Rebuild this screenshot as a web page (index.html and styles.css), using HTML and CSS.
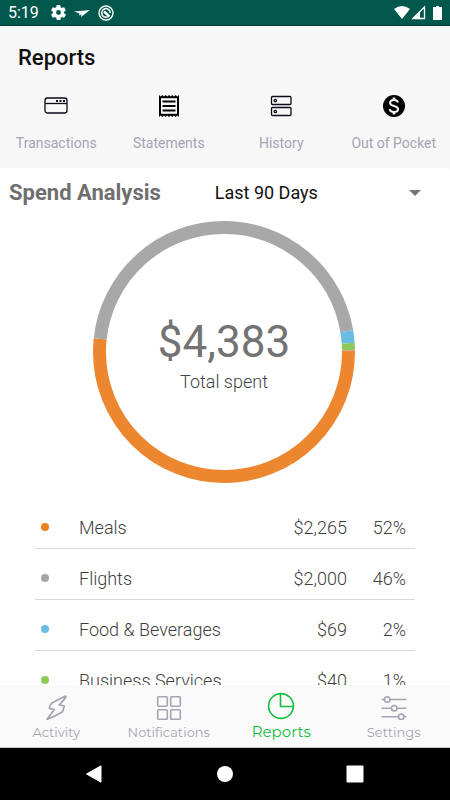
FILE: index.html
```html
<!DOCTYPE html>
<html lang="en">
<head>
<meta charset="utf-8">
<meta name="viewport" content="width=device-width, initial-scale=1">
<title>Reports</title>
<link rel="stylesheet" href="styles.css">
</head>
<body>
<div class="status">
  <div class="status-group">
    <span class="clock">5:19</span>
    <svg width="15" height="15" viewBox="2 2 20 20"><path fill="#fff" d="M19.4 13c0-.3.1-.6.1-1s0-.7-.1-1l2.100-1.600c.2-.2.2-.4.100-.6l-2-3.500c-.1-.2-.4-.3-.6-.2l-2.500 1c-.5-.4-1.100-.7-1.700-1l-.4-2.700c0-.2-.2-.4-.5-.4h-4c-.2 0-.5.200-.5.4l-.4 2.700c-.6.2-1.200.6-1.700 1l-2.500-1c-.2-.1-.5 0-.6.2l-2 3.500c-.1.2-.1.5.1.600L4.500 11c0 .3-.1.700-.1 1s0 .7.1 1l-2.100 1.700c-.2.100-.2.400-.1.600l2 3.500c.1.200.4.300.6.200l2.500-1c.5.400 1.100.7 1.700 1l.4 2.600c0 .200.2.400.5.400h4c.2 0 .5-.2.5-.4l.4-2.600c.6-.3 1.200-.6 1.700-1l2.500 1c.2.100.5 0 .6-.2l2-3.500c.1-.2.1-.5-.1-.6zM12 15.200a3.200 3.200 0 1 1 0-6.400 3.200 3.200 0 0 1 0 6.400z"/></svg>
    <svg width="16" height="16" viewBox="0 0 16 16"><path fill="#fff" d="M0 6.500 16 5 7 12 7.500 9.500 5 10.500 5.500 8.500z"/></svg>
    <svg width="16" height="16" viewBox="0 0 16 16" fill="none" stroke="#fff"><circle cx="8" cy="8" r="7" stroke-width="1.400"/><path stroke-width="1.500" d="M11 11A4.300 4.300 0 1 1 12.300 8"/><path stroke-width="2.400" d="M6 6.500l5.500 5"/></svg>
  </div>
  <div class="status-group status-right">
    <svg width="44" height="16" viewBox="0 0 44 16"><path fill="#fff" d="M5 4Q13-2 21 4L13 14z"/><path fill="none" stroke="#fff" stroke-width="1.300" d="M24 13.500 35.500 2v11.500z"/><path fill="#fff" d="M23 14l8-8v8z"/></svg>
    <svg width="9" height="16" viewBox="0 0 9 16"><path fill="#fff" d="M3 1h3v1h3v13H0V2h3z"/></svg>
  </div>
</div>

<header class="header">
  <h1>Reports</h1>
  <nav class="shortcuts" aria-label="Report types">
    <a href="#transactions">
      <svg width="24" height="24" viewBox="0 0 24 24" fill="none" stroke="#0b0b1c" stroke-width="1.300"><rect x="1" y="4" width="22" height="15" rx="2.500"/><path d="M1 9.500h22"/><path stroke-width="2" d="M12 7h2M15.500 7h2M19 7h2"/></svg>
      <span>Transactions</span></a>
    <a href="#statements">
      <svg width="24" height="24" viewBox="0 0 24 24"><path fill="#050505" d="M2 1l1.700 1.500L5.300 1 7 2.500 8.700 1l1.600 1.500L12 1l1.700 1.500L15.300 1 17 2.500 18.700 1l1.600 1.500L22 1v22l-1.700-1.500-1.600 1.500-1.700-1.500-1.700 1.500-1.600-1.500L12 23l-1.700-1.500L8.700 23 7 21.500 5.300 23l-1.600-1.500L2 23z"/><path fill="#f7f7f7" d="M4 4.200h16v15.600H4z"/><path stroke="#050505" stroke-width="2" d="M5.500 7.500h13M5.500 12h13M5.500 16.500h13"/></svg>
      <span>Statements</span></a>
    <a href="#history">
      <svg width="24" height="24" viewBox="0 0 24 24" fill="none" stroke="#0b0b1c" stroke-width="1.300"><rect x="2.500" y="2.500" width="19.500" height="8" rx="1"/><rect x="2.500" y="13.500" width="19.500" height="8" rx="1"/><circle cx="6.300" cy="6.500" r="1.200"/><circle cx="6.300" cy="17.500" r="1.200"/></svg>
      <span>History</span></a>
    <a href="#out-of-pocket">
      <svg width="24" height="24" viewBox="0 0 24 24" fill="none" stroke="#f7f7f7"><circle cx="12" cy="12" r="11" fill="#000" stroke="none"/><path stroke-width="2" d="M16 8.500C15.500 6.800 14 6 12 6c-2.300 0-3.900 1.100-3.900 2.900 0 4.100 8 2 8 6.200 0 1.900-1.700 2.900-4.100 2.900-2.300 0-4-.9-4.300-2.900"/><path stroke-width="2.600" d="M12 3.500V6M12 18v2.500"/></svg>
      <span>Out of Pocket</span></a>
  </nav>
</header>

<main class="analysis">
  <div class="analysis-head">
    <h2><label for="period">Spend Analysis</label></h2>
    <div class="period">
      <select id="period"><option>Last 90 Days</option><option>Last 30 Days</option></select>
      <svg width="12" height="6" viewBox="0 0 12 6"><path fill="#757575" d="M0 0h12L6 6z"/></svg>
    </div>
  </div>
  <div class="chart">
    <svg width="262" height="262" viewBox="0 0 262 262" fill="none" stroke-width="13" role="img" aria-label="Spend by category">
      <circle cx="131" cy="131" r="124.500" stroke="#ec872f" pathLength="4383" stroke-dasharray="2265 2118"/>
      <circle cx="131" cy="131" r="124.500" stroke="#a8a8a8" pathLength="4383" stroke-dasharray="2000 2383" stroke-dashoffset="-2265"/>
      <circle cx="131" cy="131" r="124.500" stroke="#69bce2" pathLength="4383" stroke-dasharray="69 4314" stroke-dashoffset="-4265"/>
      <circle cx="131" cy="131" r="124.500" stroke="#8dca5b" pathLength="4383" stroke-dasharray="40 4343" stroke-dashoffset="-4334"/>
      <circle cx="131" cy="131" r="124.500" stroke="#ec8750" pathLength="4383" stroke-dasharray="9 4374" stroke-dashoffset="-4374"/>
    </svg>
    <div class="total"><strong>$4,383</strong><span>Total spent</span></div>
  </div>
  <table class="categories">
    <tbody>
      <tr><td class="mark"><i class="dot meals"></i></td><th scope="row">Meals</th><td>$2,265</td><td class="share">52%</td></tr>
      <tr><td class="mark"><i class="dot flights"></i></td><th scope="row">Flights</th><td>$2,000</td><td class="share">46%</td></tr>
      <tr><td class="mark"><i class="dot food"></i></td><th scope="row">Food &amp; Beverages</th><td>$69</td><td class="share">2%</td></tr>
      <tr><td class="mark"><i class="dot business"></i></td><th scope="row">Business Services</th><td>$40</td><td class="share">1%</td></tr>
    </tbody>
  </table>
</main>

<nav class="tabs" aria-label="Main">
  <a href="#activity">
    <svg width="28" height="28" viewBox="0 0 28 28" fill="none" stroke="#a5a4b3" stroke-width="1.700" stroke-linejoin="round"><path d="M23.500 4 9.500 11.200Q7.500 14 7.300 16.300l5 1.200L5 27.300Q13 24.500 20.500 19.800L22.300 14l-5-1.200Q22 8.500 24 4.500z"/></svg>
    <span>Activity</span></a>
  <a href="#notifications">
    <svg width="28" height="28" viewBox="0 0 28 28" fill="none" stroke="#a5a4b3" stroke-width="1.600"><rect x="2.700" y="4.700" width="9.600" height="9.600" rx="1"/><rect x="15.700" y="4.700" width="9.600" height="9.600" rx="1"/><rect x="2.700" y="17.700" width="9.600" height="9.600" rx="1"/><rect x="15.700" y="17.700" width="9.600" height="9.600" rx="1"/></svg>
    <span>Notifications</span></a>
  <a href="#reports" class="current" aria-current="page">
    <svg width="28" height="28" viewBox="0 0 28 28" fill="none" stroke="#13be43" stroke-width="1.600"><circle cx="14" cy="14" r="12.400"/><path d="M13.500 1.600V14.500h12.900"/></svg>
    <span>Reports</span></a>
  <a href="#settings">
    <svg width="28" height="28" viewBox="0 0 28 28" fill="none" stroke="#a5a4b3" stroke-width="1.600"><path d="M1.500 7.500h3M10 7.500h16.500M1.500 16.200h10M17 16.200h9.500M1.500 24.800h17M24 24.800h2.500"/><circle cx="7.200" cy="7.500" r="2.700"/><circle cx="14.200" cy="16.200" r="2.700"/><circle cx="21.200" cy="24.800" r="2.700"/></svg>
    <span>Settings</span></a>
</nav>

<div class="system">
  <button type="button" aria-label="Back"><svg width="18" height="20" viewBox="0 0 18 20"><path fill="#fff" stroke="#fff" stroke-linejoin="round" d="M1.500 10 16 1.800v16.400z"/></svg></button>
  <button type="button" aria-label="Home"><svg width="18" height="18" viewBox="0 0 18 18"><circle cx="9" cy="9" r="8" fill="#fff"/></svg></button>
  <button type="button" aria-label="Recent apps"><svg width="18" height="18" viewBox="0 0 18 18"><rect x="0.500" y="0.500" width="17" height="17" rx="1" fill="#fff"/></svg></button>
</div>
</body>
</html>
```
FILE: styles.css
```css
* { box-sizing: border-box; }
body {
  margin: 0;
  height: 100vh;
  display: flex;
  flex-direction: column;
  overflow: hidden;
  background: #f7f7f7;
  font-family: Roboto, "Liberation Sans", sans-serif;
}
svg { display: block; flex: none; }
a { color: inherit; text-decoration: none; }
h1, h2 { margin: 0; }

.status {
  flex: none;
  height: 26px;
  padding: 0 8px;
  display: flex;
  justify-content: space-between;
  align-items: center;
  background: #00574b;
  border-bottom: 1px solid #003d2c;
  color: #fff;
}
.status-group { display: flex; align-items: center; gap: 8px; }
.status-right { gap: 0; }
.clock { font-size: 16px; margin-right: 4px; }

.header { flex: none; background: #f7f7f7; padding: 16px 0; }
h1 {
  padding: 0 18px;
  font-size: 22px;
  line-height: 32px;
  font-weight: 500;
  color: #101010;
}
.shortcuts {
  display: grid;
  grid-template-columns: repeat(4, 1fr);
  padding-top: 20px;
}
.shortcuts a {
  display: flex;
  flex-direction: column;
  align-items: center;
  gap: 16px;
  font-size: 14px;
  line-height: 18px;
  color: #a5a4b3;
  white-space: nowrap;
}

.analysis {
  flex: 1;
  min-height: 0;
  overflow: hidden;
  border-radius: 3px 3px 0 0;
  background: #fff;
}
.analysis-head { display: flex; align-items: center; height: 50px; padding: 0 29px 0 9px; }
h2 { flex: 1; font-size: 22px; line-height: 28px; font-weight: 700; color: #6f6f6f; white-space: nowrap; }
.period { width: 52%; display: flex; align-items: center; }
.period svg { margin-left: -12px; pointer-events: none; }
select {
  appearance: none;
  width: 100%;
  padding: 4px 16px 4px 8px;
  border: 0;
  background: none;
  font: 18px/24px Roboto, sans-serif;
  color: #111;
}

.chart { display: grid; place-items: center; padding: 3px 2px 0 0; }
.chart > * { grid-area: 1 / 1; }
.total { display: flex; flex-direction: column; align-items: center; padding-top: 8px; color: #737373; }
.total strong { font-size: 44px; line-height: 52px; font-weight: 400; }
.total span { font-size: 18px; line-height: 28px; font-weight: 300; color: #444; }

.categories {
  width: calc(100% - 70px);
  margin: 14px 35px 0;
  border-collapse: collapse;
  font-size: 18px;
  line-height: 20px;
  color: #404040;
}
.categories tr { height: 51px; border-bottom: 1px solid #d8d8d8; }
.categories th, .categories td { padding: 11px 0 0; font-weight: 300; text-align: right; }
.categories th { text-align: left; }
.categories .mark { width: 44px; padding: 9px 0 0 6px; }
.categories .share { width: 68px; padding-right: 9px; }
.categories td:nth-child(3) { width: 100px; }
.dot { display: block; width: 8px; height: 8px; border-radius: 50%; }
.meals { background: #e8801f; }
.flights { background: #a5a5a5; }
.food { background: #69bce2; }
.business { background: #8dca5b; }

.tabs {
  flex: none;
  display: grid;
  grid-template-columns: repeat(4, 1fr);
  height: 63px;
  padding-top: 7px;
  background: #fafafa;
  border-bottom: 1px solid #c8c8c8;
  font-family: Montserrat, Inter, sans-serif;
  font-size: 13px;
  line-height: 20px;
  color: #a5a4b3;
}
.tabs a { display: flex; flex-direction: column; align-items: center; gap: 2px; }
.tabs .current { font-size: 15px; color: #13be43; }

.system {
  flex: none;
  height: 52px;
  padding: 0 84px 0 83px;
  display: flex;
  justify-content: space-between;
  align-items: center;
  background: #000;
}
.system button { display: flex; border: 0; padding: 2px; background: none; }
```
